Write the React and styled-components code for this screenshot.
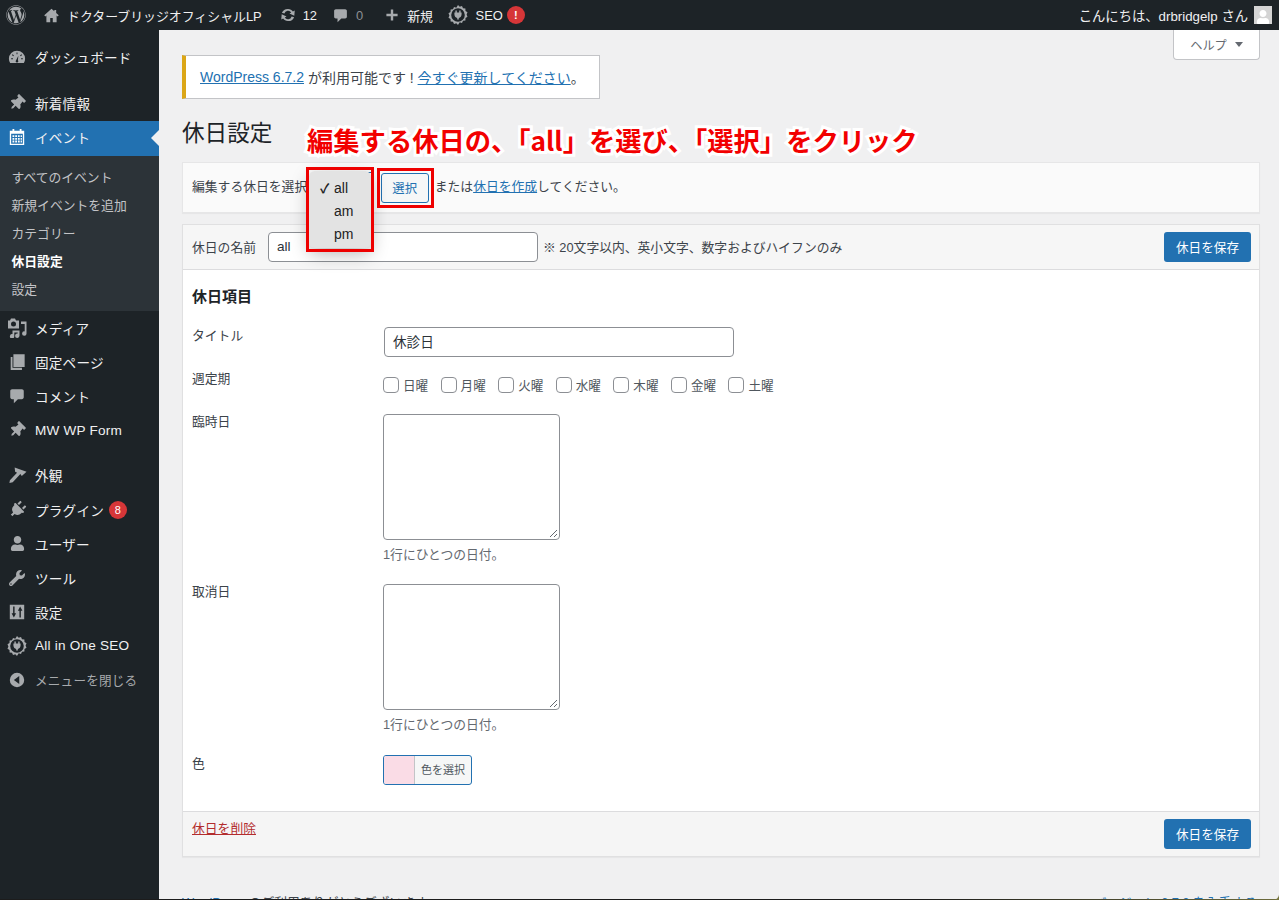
import React from "react";
import styled, { createGlobalStyle } from "styled-components";
import { FaWordpress, FaWrench, FaPlug, FaThumbtack, FaUser } from "react-icons/fa";

const GlobalStyle = createGlobalStyle`
  html, body {
    margin: 0;
    height: 900px;
    overflow: hidden;
    background: #f0f0f1;
  }
  body {
    font-family: "Liberation Sans", "Noto Sans CJK JP", sans-serif;
    font-size: 12.8px;
    color: #3c434a;
  }
  * { box-sizing: border-box; }
`;

const Page = styled.div`
  position: relative;
  height: 900px;
  display: flex;
  flex-direction: column;
  overflow: hidden;
`;

const WindowEdge = styled.span`
  position: absolute;
  left: 0;
  right: 0;
  bottom: 0;
  height: 1px;
  background: linear-gradient(to right, #1c1c1c 72%, #6d6b3c 100%);
`;

const WindowCorner = styled.span`
  position: absolute;
  right: 0;
  bottom: 0;
  width: 6px;
  height: 6px;
  background: radial-gradient(circle at 0 0, transparent 5.5px, #77763f 6.5px);
`;

const AdminBar = styled.header`
  flex: 0 0 30px;
  display: flex;
  align-items: center;
  justify-content: space-between;
  background: #1d2327;
  color: #f0f0f1;
  font-size: 12.9px;
  padding: 0 7px 0 6px;
`;

const BarGroup = styled.div`
  display: flex;
  align-items: center;
`;

const BarItem = styled.span`
  display: flex;
  align-items: center;
  gap: ${(p) => p.$gap || 6}px;
  margin-right: ${(p) => p.$mr || 0}px;
  color: ${(p) => (p.$muted ? "#8c8f94" : "#f0f0f1")};
  svg { color: #a7aaad; fill: currentColor; flex: none; }
`;

const AlertDot = styled.span`
  width: 18px;
  height: 18px;
  border-radius: 50%;
  background: #d63638;
  color: #fff;
  font-size: 11px;
  font-weight: bold;
  display: flex;
  align-items: center;
  justify-content: center;
`;

const Greeting = styled.span`
  font-size: 13.3px;
`;

const Avatar = styled.span`
  width: 18px;
  height: 18px;
  background: #d4d4d4;
  margin-left: 6px;
  display: flex;
  align-items: flex-end;
  justify-content: center;
  svg { color: #fff; }
`;

const Body = styled.div`
  flex: 1;
  display: flex;
  min-height: 0;
`;

const Sidebar = styled.nav`
  flex: 0 0 159px;
  background: #1d2327;
  padding-top: 10.5px;
`;

const MenuGroup = styled.div`
  margin-bottom: ${(p) => p.$mb || 0}px;
`;

const MenuRow = styled.div`
  position: relative;
  height: ${(p) => (p.$active ? 35.3 : 34.1)}px;
  display: flex;
  align-items: center;
  padding: 0 0 ${(p) => (p.$active ? 3 : 1)}px 8px;
  font-size: ${(p) => (p.$dim ? 12.6 : 13.6)}px;
  color: ${(p) => (p.$dim ? "#a7aaad" : "#f0f0f1")};
  background: ${(p) => (p.$active ? "#2271b1" : "transparent")};
  letter-spacing: 0.2px;
`;

const MenuIcon = styled.span`
  width: 18px;
  height: 18px;
  margin-right: 9px;
  display: flex;
  align-items: center;
  justify-content: center;
  flex: none;
  color: ${(p) => (p.$active ? "#fff" : "#a7aaad")};
  svg { fill: currentColor; display: block; flex: none; }
`;

const ActiveArrow = styled.span`
  position: absolute;
  right: 0;
  top: 9px;
  border: 8px solid transparent;
  border-right-color: #f0f0f1;
  border-left-width: 0;
`;

const MenuBadge = styled.span`
  width: 18px;
  height: 18px;
  margin-left: 5px;
  border-radius: 50%;
  background: #d63638;
  color: #fff;
  font-size: 11px;
  display: flex;
  align-items: center;
  justify-content: center;
`;

const SubMenu = styled.ul`
  list-style: none;
  margin: 0;
  padding: 8px 0 7.5px;
  background: #2c3338;
`;

const SubItem = styled.li`
  height: 28px;
  line-height: 28px;
  padding-left: 11.5px;
  font-size: 12.8px;
  color: ${(p) => (p.$current ? "#fff" : "#c3c4c7")};
  font-weight: ${(p) => (p.$current ? 700 : 400)};
`;

const Main = styled.main`
  position: relative;
  flex: 1;
  min-width: 0;
  padding: 25px 19px 0 23px;
  display: flex;
  flex-direction: column;
  > * { flex: none; }
`;

const HelpTab = styled.div`
  position: absolute;
  top: 0;
  right: 19px;
  width: 87px;
  height: 30px;
  background: #fff;
  border: 1px solid #c3c4c7;
  border-top: 0;
  border-radius: 0 0 4px 4px;
  display: flex;
  align-items: center;
  justify-content: center;
  gap: 8px;
  color: #646970;
  font-size: 12.2px;
`;

const Caret = styled.span`
  border: 4px solid transparent;
  border-top: 5px solid #646970;
  border-bottom: 0;
`;

const Notice = styled.div`
  width: 418px;
  height: 44px;
  background: #fff;
  border: 1px solid #c3c4c7;
  border-left: 4px solid #dba617;
  display: flex;
  align-items: center;
  padding-left: 14px;
  font-size: 14px;
`;

const TextLink = styled.a`
  color: ${(p) => (p.$danger ? "#b32d2e" : "#2271b1")};
  text-decoration: underline;
`;

const TitleRow = styled.div`
  position: relative;
  height: 63px;
  display: flex;
  align-items: center;
  padding-top: 2px;
`;

const Title = styled.h1`
  margin: 0;
  font-size: 22.6px;
  font-weight: 400;
  color: #1d2327;
`;

const Callout = styled.div`
  position: absolute;
  left: 125px;
  top: 23px;
  font-family: "Noto Sans CJK JP", sans-serif;
  font-size: 26.3px;
  line-height: 36px;
  font-weight: 700;
  white-space: nowrap;
  color: #f20000;
  -webkit-text-stroke: 6px #fff;
  paint-order: stroke fill;
`;

const SelectPanel = styled.section`
  position: relative;
  height: 51px;
  background: #fafafa;
  border: 1px solid #e6e6e7;
  box-shadow: 0 1px 1px rgba(0, 0, 0, 0.04);
  display: flex;
  align-items: center;
  padding-left: 9px;
`;

const PanelText = styled.span`
  margin-top: -5px;
  white-space: nowrap;
`;

const SelectBase = styled.div`
  width: 62px;
  height: 31px;
  margin: 0 0 1px 1px;
  border: 1px solid #2271b1;
  border-radius: 3px;
  background: #fff;
`;

const OptionMenu = styled.ul`
  position: absolute;
  left: 126px;
  top: 8px;
  width: 62px;
  height: 77px;
  margin: 0;
  padding: 6px 0;
  list-style: none;
  background: #e3e3e3;
  border-radius: 6px;
  box-shadow: 0 6px 18px rgba(0, 0, 0, 0.28);
  z-index: 2;
`;

const OptionItem = styled.li`
  position: relative;
  height: 23px;
  line-height: 23px;
  padding-left: 25px;
  font-size: 14px;
  color: #222;
`;

const Check = styled.span`
  position: absolute;
  left: 11px;
  top: 0;
  font-size: 13px;
  font-weight: 700;
`;

const RedFrame = styled.span`
  position: absolute;
  border: 3px solid #ee0000;
  z-index: 3;
  pointer-events: none;
`;

const MenuFrame = styled(RedFrame)`
  left: 123px;
  top: 4px;
  width: 68px;
  height: 85px;
`;

const ButtonFrame = styled(RedFrame)`
  left: 194px;
  top: 5px;
  width: 57px;
  height: 40px;
`;

const OutlineButton = styled.button`
  width: 48px;
  height: 30px;
  margin: 1px 6px 0 7px;
  padding: 0;
  font: inherit;
  font-size: 12.4px;
  background: #f6f7f7;
  color: #2271b1;
  border: 1px solid #2271b1;
  border-radius: 3px;
`;

const EditPanel = styled.section`
  margin-top: 11px;
  height: 633px;
  background: #fff;
  border: 1px solid #e0e0e1;
  box-shadow: 0 1px 1px rgba(0, 0, 0, 0.04);
  display: flex;
  flex-direction: column;
`;

const PanelHead = styled.div`
  flex: 0 0 45px;
  background: #f6f6f6;
  border-bottom: 1px solid #dcdcde;
  display: flex;
  align-items: center;
  padding: 0 8px 0 9px;
`;

const NameLabel = styled.label`
  width: 76px;
  flex: none;
  margin-top: -2px;
`;

const TextInput = styled.div`
  width: ${(p) => p.$w}px;
  height: 30px;
  margin-left: ${(p) => p.$ml || 0}px;
  background: #fff;
  border: 1px solid #8c8f94;
  border-radius: 4px;
  padding: 0 8px ${(p) => p.$pb || 1}px;
  display: flex;
  align-items: center;
  font-size: 13.6px;
  color: #2c3338;
  flex: none;
`;

const HeadNote = styled.span`
  margin: -2px 0 0 5px;
  flex: 1;
`;

const SaveButton = styled.button`
  width: 87px;
  height: 30px;
  padding: 0 0 2px;
  background: #2271b1;
  color: #fff;
  border: 0;
  border-radius: 3px;
  font: inherit;
  font-size: 12.6px;
`;

const PanelBody = styled.div`
  flex: 1;
  padding: 17px 9px 0;
`;

const SectionTitle = styled.h2`
  margin: 0 0 20px;
  font-size: 15px;
  line-height: 20px;
  font-weight: 700;
  color: #1d2327;
`;

const FieldRow = styled.div`
  display: grid;
  grid-template-columns: 191px 1fr;
  margin-bottom: ${(p) => p.$mb || 0}px;
`;

const FieldLabel = styled.div`
  line-height: 16px;
  padding-top: ${(p) => p.$pt ?? 1}px;
`;

const DayList = styled.div`
  display: flex;
  gap: 12.4px;
  padding-top: 6px;
`;

const DayOption = styled.label`
  display: flex;
  align-items: center;
  gap: 4px;
  font-size: 12.6px;
  color: #50575e;
`;

const CheckBox = styled.span`
  width: 16px;
  height: 16px;
  background: #fff;
  border: 1px solid #8c8f94;
  border-radius: 4px;
`;

const TextArea = styled.div`
  position: relative;
  width: 177px;
  height: 126px;
  background: #fff;
  border: 1px solid #8c8f94;
  border-radius: 4px;
`;

const ResizeGrip = styled.svg`
  position: absolute;
  right: 1px;
  bottom: 1px;
`;

const Hint = styled.p`
  margin: 7px 0 0;
  line-height: 16px;
  color: #646970;
`;

const ColorButton = styled.div`
  width: 89px;
  height: 30px;
  display: flex;
  overflow: hidden;
  border: 1px solid #2271b1;
  border-radius: 3px;
  background: #f6f7f7;
`;

const ColorSwatch = styled.span`
  width: 31px;
  background: ${(p) => p.$color};
  border-right: 1px solid #c3c4c7;
`;

const ColorText = styled.span`
  flex: 1;
  text-align: center;
  line-height: 28px;
  font-size: 11px;
  color: #50575e;
`;

const PanelFoot = styled.div`
  flex: 0 0 45px;
  background: #f5f5f5;
  border-top: 1px solid #dcdcde;
  display: flex;
  justify-content: space-between;
  padding: 7px 8px 0 9px;
`;

const DeleteLink = styled(TextLink)`
  line-height: 18px;
  margin-top: 1px;
`;

const Footer = styled.footer`
  display: flex;
  justify-content: space-between;
  margin-top: 38px;
  line-height: 16px;
  padding-right: 3px;
`;

const HomeIcon = (p) => (
  <svg viewBox="0 0 20 20" {...p}>
    <path d="M10 2 1.500 9.800l1.200 1.300L4 10v8h4.500v-5h3v5H16v-8l1.300 1.100 1.200-1.300L15.500 7V3.500h-2.200V5z" />
  </svg>
);
const UpdateIcon = (p) => (
  <svg viewBox="0 0 20 20" {...p}>
    <path d="M10.200 3.300c2.200 0 4.100 1.100 5.200 2.800l2.100-1.200-.5 6-5.400-2.600 2-1.200a4.200 4.200 0 0 0-7.600 1.200L3.200 7.600a7.200 7.200 0 0 1 7-4.300zM9.800 16.700c-2.200 0-4.100-1.100-5.200-2.800l-2.100 1.200.5-6 5.400 2.600-2 1.200a4.200 4.200 0 0 0 7.600-1.200l2.800.7a7.200 7.200 0 0 1-7 4.300z" />
  </svg>
);
const CommentIcon = (p) => (
  <svg viewBox="0 0 20 20" {...p}>
    <path d="M4.500 2.500h11c1.100 0 2 .9 2 2v7c0 1.100-.9 2-2 2H11l-4.500 4.500V13.500h-2c-1.100 0-2-.9-2-2v-7c0-1.100.9-2 2-2z" />
  </svg>
);
const PlusIcon = (p) => (
  <svg viewBox="0 0 20 20" {...p}>
    <path d="M8.500 3h3v5.500H17v3h-5.500V17h-3v-5.500H3v-3h5.500z" />
  </svg>
);
const SeoIcon = (p) => (
  <svg viewBox="0 0 20 20" {...p}>
    <path
      fillRule="evenodd"
      d="M10 0l1.700 1.700 2.300-.7 1 2.200 2.400.3.100 2.400 2 1.300-.9 2.300.9 2.300-2 1.300-.100 2.400-2.400.3-1 2.200-2.300-.7L10 20l-1.700-1.700-2.300.7-1-2.200-2.400-.3-.100-2.400-2-1.300.9-2.300-.9-2.300 2-1.300.100-2.400 2.400-.3 1-2.200 2.300.7zM10 3.200a6.800 6.800 0 1 0 0 13.600 6.800 6.800 0 0 0 0-13.600zM7.400 5.600h1.400v2h2.400v-2h1.400v2h1v1.600c0 2-1.200 3.300-2.800 3.700v1.700H9.200v-1.700C7.500 12.500 6.400 11.200 6.400 9.200V7.600h1z"
    />
  </svg>
);
const GaugeIcon = (p) => (
  <svg viewBox="0 0 20 20" {...p}>
    <path
      fillRule="evenodd"
      d="M10 3a9 9 0 0 0-9 9c0 1.800.5 3.400 1.400 4.800h15.200A9 9 0 0 0 19 12a9 9 0 0 0-9-9zM9.500 5h1v2h-1zM5.200 7l1.400 1.400-.8.800L4.400 7.800zm9.600 0 .8.800-1.400 1.400-.8-.8zM3.500 11.500h2v1h-2zm11 0h2v1h-2zM11.500 8.500l-.5 5a1.500 1.500 0 1 1-2 0z"
    />
  </svg>
);
const CalendarIcon = (p) => (
  <svg viewBox="0 0 20 20" {...p}>
    <path
      fillRule="evenodd"
      d="M5 1h2v2h6V1h2v2h3v16H2V3h3zM3.500 6.500v11h13v-11zM5 8h2v2H5zm3 0h2v2H8zm3 0h2v2h-2zm3 0h1.500v2H14zM5 11h2v2H5zm3 0h2v2H8zm3 0h2v2h-2zm3 0h1.500v2H14zM5 14h2v2H5zm3 0h2v2H8zm3 0h2v2h-2zm3 0h1.500v2H14z"
    />
  </svg>
);
const MediaIcon = (p) => (
  <svg viewBox="0 0 20 20" {...p}>
    <path
      fillRule="evenodd"
      d="M4 .5h4l1 2h3v8H1v-8h2zM6.500 3.500a2.500 2.500 0 1 0 0 5 2.500 2.500 0 0 0 0-5zM14 3.500h5.500v12a2.200 2.200 0 1 1-1.800-2.100V6H14zM5.500 12.500h7v5.200a2.200 2.200 0 1 1-1.800-2.100V14.500H7.300v3.700a2.200 2.200 0 1 1-1.800-2.100z"
    />
  </svg>
);
const PagesIcon = (p) => (
  <svg viewBox="0 0 20 20" {...p}>
    <path d="M6 1.500h12.500v14H6zM3 4.500h2v12h10.500v2.500H3z" />
  </svg>
);
const BrushIcon = (p) => (
  <svg viewBox="0 0 20 20" {...p}>
    <path d="M7 1.500 19.500 6 14.500 10.500 13 8.500 5 17 1.500 18 2 15 9.500 7 7.500 6z" />
  </svg>
);
const SlidersIcon = (p) => (
  <svg viewBox="0 0 20 20" {...p}>
    <path
      fillRule="evenodd"
      d="M2 2h16v16H2zM5.700 4v7.500H4L6.500 16 9 11.500H7.300V4zM12.700 16V8.500H11L13.500 4 16 8.500h-1.700V16z"
    />
  </svg>
);
const CollapseIcon = (p) => (
  <svg viewBox="0 0 20 20" {...p}>
    <path
      fillRule="evenodd"
      d="M10 2a8 8 0 1 1 0 16 8 8 0 0 1 0-16zm2.500 3.500L6.500 10l6 4.500z"
    />
  </svg>
);

const PinIcon = () => <FaThumbtack size={16} style={{ transform: "rotate(45deg)" }} />;

const menuTop = [
  { label: "メディア", icon: <MediaIcon width="20" height="20" /> },
  { label: "固定ページ", icon: <PagesIcon width="18" height="18" /> },
  { label: "コメント", icon: <CommentIcon width="18" height="18" /> },
  { label: "MW WP Form", icon: <PinIcon /> },
];

const menuBottom = [
  { label: "外観", icon: <BrushIcon width="19" height="19" /> },
  { label: "プラグイン", icon: <FaPlug size={17} style={{ transform: "rotate(45deg)" }} />, badge: 8 },
  { label: "ユーザー", icon: <FaUser size={15} /> },
  { label: "ツール", icon: <FaWrench size={16} /> },
  { label: "設定", icon: <SlidersIcon width="18" height="18" /> },
  { label: "All in One SEO", icon: <SeoIcon width="20" height="20" /> },
];

const subItems = ["すべてのイベント", "新規イベントを追加", "カテゴリー", "休日設定", "設定"];
const days = ["日曜", "月曜", "火曜", "水曜", "木曜", "金曜", "土曜"];

function DateField({ label, mb }) {
  return (
    <FieldRow $mb={mb}>
      <FieldLabel $pt={0}>{label}</FieldLabel>
      <div>
        <TextArea>
          <ResizeGrip width="9" height="9" viewBox="0 0 9 9">
            <path d="M1 8 8 1M5 8l3-3" stroke="#646970" strokeWidth="1" fill="none" />
          </ResizeGrip>
        </TextArea>
        <Hint>1行にひとつの日付。</Hint>
      </div>
    </FieldRow>
  );
}

export default function App() {
  return (
    <Page>
      <GlobalStyle />
      <AdminBar>
        <BarGroup>
          <BarItem $mr={17}>
            <FaWordpress size={20} />
          </BarItem>
          <BarItem $mr={17} $gap={7}>
            <HomeIcon width="17" height="17" />
            ドクターブリッジオフィシャルLP
          </BarItem>
          <BarItem $mr={15}>
            <UpdateIcon width="18" height="18" />
            12
          </BarItem>
          <BarItem $mr={21} $gap={7} $muted>
            <CommentIcon width="17" height="17" />
            0
          </BarItem>
          <BarItem $mr={15} $gap={7}>
            <PlusIcon width="16" height="16" />
            新規
          </BarItem>
          <BarItem $gap={4}>
            <SeoIcon width="20" height="20" />
            &nbsp;SEO
            <AlertDot>!</AlertDot>
          </BarItem>
        </BarGroup>
        <BarGroup>
          <Greeting>こんにちは、drbridgelp さん</Greeting>
          <Avatar>
            <FaUser size={14} />
          </Avatar>
        </BarGroup>
      </AdminBar>

      <Body>
        <Sidebar>
          <MenuGroup $mb={12}>
            <MenuRow>
              <MenuIcon><GaugeIcon width="18" height="18" /></MenuIcon>
              ダッシュボード
            </MenuRow>
          </MenuGroup>
          <MenuRow>
            <MenuIcon><PinIcon /></MenuIcon>
            新着情報
          </MenuRow>
          <MenuRow $active>
            <MenuIcon $active><CalendarIcon width="18" height="18" /></MenuIcon>
            イベント
            <ActiveArrow />
          </MenuRow>
          <SubMenu>
            {subItems.map((item) => (
              <SubItem key={item} $current={item === "休日設定"}>{item}</SubItem>
            ))}
          </SubMenu>
          <MenuGroup $mb={11}>
            {menuTop.map((m) => (
              <MenuRow key={m.label}>
                <MenuIcon>{m.icon}</MenuIcon>
                {m.label}
              </MenuRow>
            ))}
          </MenuGroup>
          {menuBottom.map((m) => (
            <MenuRow key={m.label}>
              <MenuIcon>{m.icon}</MenuIcon>
              {m.label}
              {m.badge && <MenuBadge>{m.badge}</MenuBadge>}
            </MenuRow>
          ))}
          <MenuRow $dim>
            <MenuIcon><CollapseIcon width="18" height="18" /></MenuIcon>
            メニューを閉じる
          </MenuRow>
        </Sidebar>

        <Main>
          <HelpTab>
            ヘルプ <Caret />
          </HelpTab>
          <Notice>
            <TextLink>WordPress 6.7.2</TextLink>&nbsp;が利用可能です !&nbsp;
            <TextLink>今すぐ更新してください</TextLink>。
          </Notice>
          <TitleRow>
            <Title>休日設定</Title>
            <Callout>編集する休日の、「all」を選び、「選択」をクリック</Callout>
          </TitleRow>
          <SelectPanel>
            <PanelText>編集する休日を選択:</PanelText>
            <SelectBase />
            <OutlineButton>選択</OutlineButton>
            <PanelText>
              または<TextLink>休日を作成</TextLink>してください。
            </PanelText>
            <OptionMenu>
              <OptionItem><Check>✓</Check>all</OptionItem>
              <OptionItem>am</OptionItem>
              <OptionItem>pm</OptionItem>
            </OptionMenu>
            <MenuFrame />
            <ButtonFrame />
          </SelectPanel>
          <EditPanel>
            <PanelHead>
              <NameLabel>休日の名前</NameLabel>
              <TextInput $w={270}>all</TextInput>
              <HeadNote>※ 20文字以内、英小文字、数字およびハイフンのみ</HeadNote>
              <SaveButton>休日を保存</SaveButton>
            </PanelHead>
            <PanelBody>
              <SectionTitle>休日項目</SectionTitle>
              <FieldRow $mb={12}>
                <FieldLabel>タイトル</FieldLabel>
                <TextInput $w={350} $ml={1} $pb={3}>休診日</TextInput>
              </FieldRow>
              <FieldRow $mb={20}>
                <FieldLabel $pt={2}>週定期</FieldLabel>
                <DayList>
                  {days.map((d) => (
                    <DayOption key={d}><CheckBox />{d}</DayOption>
                  ))}
                </DayList>
              </FieldRow>
              <DateField label="臨時日" mb={21} />
              <DateField label="取消日" mb={22} />
              <FieldRow>
                <FieldLabel>色</FieldLabel>
                <ColorButton>
                  <ColorSwatch $color="#fadce6" />
                  <ColorText>色を選択</ColorText>
                </ColorButton>
              </FieldRow>
            </PanelBody>
            <PanelFoot>
              <DeleteLink $danger>休日を削除</DeleteLink>
              <SaveButton>休日を保存</SaveButton>
            </PanelFoot>
          </EditPanel>
          <Footer>
            <span><TextLink>WordPress</TextLink> のご利用ありがとうございます。</span>
            <TextLink>バージョン 6.7.2 を入手する</TextLink>
          </Footer>
        </Main>
      </Body>
      <WindowEdge />
      <WindowCorner />
    </Page>
  );
}
